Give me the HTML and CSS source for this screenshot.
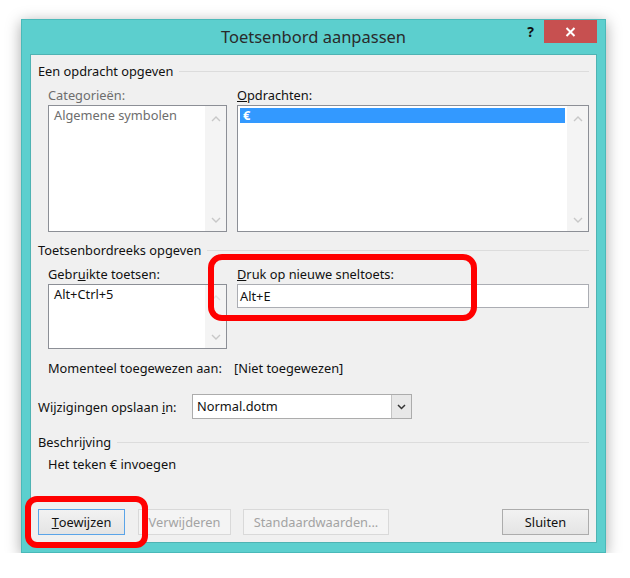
FILE: index.html
```html
<!DOCTYPE html>
<html lang="nl">
<head>
  <meta charset="UTF-8" />
  <title>Toetsenbord aanpassen</title>
  <link rel="stylesheet" href="styles.css">
</head>
<body>
  <div class="window">
    <div class="titlebar">
      <span></span>
      <span class="title">Toetsenbord aanpassen</span>
      <div class="controls">
        <span class="help">?</span>
        <span class="close">
          <svg width="11" height="10" viewBox="0 0 11 10"><path d="M1.5 1 L9.5 9 M9.5 1 L1.5 9" stroke="#fff" stroke-width="2"/></svg>
        </span>
      </div>
    </div>

    <div class="client">
      <div class="group">Een opdracht opgeven</div>
      <div class="pair top">
        <div class="col">
          <div class="label disabled">Categorieën:</div>
          <div class="listbox tall">
            <div class="items"><div class="item disabled">Algemene symbolen</div></div>
            <div class="scroll">
              <svg width="10" height="6" viewBox="0 0 10 6"><path d="M1 5 L5 1 L9 5" fill="none" stroke="#c8c8c8" stroke-width="1.4"/></svg>
              <svg width="10" height="6" viewBox="0 0 10 6"><path d="M1 1 L5 5 L9 1" fill="none" stroke="#c8c8c8" stroke-width="1.4"/></svg>
            </div>
          </div>
        </div>
        <div class="col">
          <div class="label"><u>O</u>pdrachten:</div>
          <div class="listbox tall">
            <div class="items"><div class="item selected">€</div></div>
            <div class="scroll">
              <svg width="10" height="6" viewBox="0 0 10 6"><path d="M1 5 L5 1 L9 5" fill="none" stroke="#c8c8c8" stroke-width="1.4"/></svg>
              <svg width="10" height="6" viewBox="0 0 10 6"><path d="M1 1 L5 5 L9 1" fill="none" stroke="#c8c8c8" stroke-width="1.4"/></svg>
            </div>
          </div>
        </div>
      </div>

      <div class="group second">Toetsenbordreeks opgeven</div>
      <div class="pair">
        <div class="col">
          <div class="label">Gebr<u>u</u>ikte toetsen:</div>
          <div class="listbox short">
            <div class="items"><div class="item">Alt+Ctrl+5</div></div>
            <div class="scroll">
              <svg width="10" height="6" viewBox="0 0 10 6"><path d="M1 5 L5 1 L9 5" fill="none" stroke="#e0e0e0" stroke-width="1.4"/></svg>
              <svg width="10" height="6" viewBox="0 0 10 6"><path d="M1 1 L5 5 L9 1" fill="none" stroke="#c8c8c8" stroke-width="1.4"/></svg>
            </div>
          </div>
        </div>
        <div class="col">
          <div class="label"><u>D</u>ruk op nieuwe sneltoets:</div>
          <div class="input">Alt+E</div>
        </div>
      </div>

      <div class="current">
        <span class="current-label">Momenteel toegewezen aan:</span>
        <span>[Niet toegewezen]</span>
      </div>

      <div class="save">
        <span class="save-label">Wijzigingen opslaan <u>i</u>n:</span>
        <div class="combo">
          <span class="value">Normal.dotm</span>
          <span class="drop">
            <svg width="9" height="6" viewBox="0 0 9 6"><path d="M1 1 L4.5 4.5 L8 1" fill="none" stroke="#333" stroke-width="1.5"/></svg>
          </span>
        </div>
      </div>

      <div class="group third">Beschrijving</div>
      <div class="desc">Het teken € invoegen</div>

      <div class="buttons">
        <span class="btn default"><u>T</u>oewijzen</span>
        <span class="btn off">Verwijderen</span>
        <span class="btn off wide">Standaardwaarden...</span>
        <span class="spacer"></span>
        <span class="btn">Sluiten</span>
      </div>

      <div class="mark mark-key"></div>
      <div class="mark mark-btn"></div>
    </div>
  </div>
</body>
</html>
```

FILE: styles.css
```css
body {
  margin: 0;
  background: #fff;
  font-family: 'Noto Sans', 'Open Sans', sans-serif;
  font-size: 12.8px;
  color: #111;
}
.window {
  margin: 19px 0 0 21px;
  width: 585px;
  height: 534px;
  box-sizing: border-box;
  background: #5ccfce;
  border: 1px solid #4ab9b9;
  padding: 0 8px 9px 8px;
  display: flex;
  flex-direction: column;
  box-shadow: 0 3px 14px rgba(0, 0, 0, 0.35);
}
.titlebar {
  height: 34px;
  display: grid;
  grid-template-columns: 1fr auto 1fr;
  align-items: start;
}
.title {
  font-size: 16.5px;
  color: #2a2a2a;
  margin-top: 5px;
}
.controls {
  display: flex;
  justify-content: flex-end;
  align-items: flex-start;
}
.help {
  font-weight: bold;
  font-size: 14px;
  color: #111;
  margin: 2px 10px 0 0;
}
.close {
  width: 53px;
  height: 23px;
  background: #c75050;
  display: flex;
  align-items: center;
  justify-content: center;
}
.client {
  position: relative;
  flex: 1;
  background: #f0f0f0;
  border: 1px solid #4fb3b3;
  padding: 8px 7px 7px 7px;
  display: flex;
  flex-direction: column;
}
.group {
  display: flex;
  align-items: center;
  gap: 6px;
  height: 16px;
  line-height: 16px;
}
.group::after {
  content: "";
  flex: 1;
  border-top: 1px solid #dcdcdc;
  margin-top: 1px;
}
.group.second { margin-top: 10px; }
.group.third { margin-top: 15px; }
.pair {
  display: grid;
  grid-template-columns: 179px 1fr;
  gap: 10px;
  margin: 8px 0 0 10px;
}
.label {
  line-height: 16px;
  margin-bottom: 2px;
}
.disabled { color: #6d6d6d; }
.listbox {
  background: #fff;
  border: 1px solid #8c8f96;
  display: flex;
}
.listbox.tall { height: 125px; }
.listbox.short { height: 63px; }
.items {
  flex: 1;
  padding: 2px;
}
.item {
  height: 15px;
  line-height: 15px;
  padding-left: 3px;
}
.item.selected {
  background: #3399ff;
  color: #fff;
  font-weight: bold;
}
.scroll {
  width: 21px;
  background: #f4f4f4;
  display: flex;
  flex-direction: column;
  justify-content: space-between;
  align-items: center;
  padding: 10px 0 8px;
}
.input {
  height: 22px;
  line-height: 22px;
  background: #fff;
  border: 1px solid #abadb3;
  padding-left: 2px;
}
.current {
  display: flex;
  margin: 11px 0 0 10px;
  line-height: 16px;
}
.current-label { width: 186px; }
.save {
  display: flex;
  align-items: center;
  margin-top: 18px;
}
.save-label { width: 154px; }
.combo {
  width: 220px;
  height: 25px;
  box-sizing: border-box;
  background: #fff;
  border: 1px solid #acacac;
  display: flex;
}
.combo .value {
  flex: 1;
  line-height: 23px;
  padding-left: 4px;
}
.combo .drop {
  width: 19px;
  background: #e8e8e8;
  border-left: 1px solid #c4c4c4;
  display: flex;
  align-items: center;
  justify-content: center;
}
.desc {
  margin: 6px 0 0 10px;
  line-height: 16px;
}
.buttons {
  margin-top: auto;
  display: flex;
  gap: 12px;
}
.spacer { flex: 1; }
.btn {
  width: 87px;
  height: 26px;
  box-sizing: border-box;
  border: 1px solid #acacac;
  background: linear-gradient(#f2f2f2, #e4e4e4);
  display: flex;
  align-items: center;
  justify-content: center;
}
.btn.default {
  border-color: #5aa4e8;
  margin-right: 1px;
}
.btn.off {
  width: 93px;
  border-color: #d9d9d9;
  background: #f4f4f4;
  color: #a3a3a3;
}
.btn.off.wide { width: 146px; }
.mark {
  position: absolute;
  border: 6px solid #ff0000;
  border-radius: 14px;
  box-sizing: border-box;
}
.mark-key {
  left: 177px;
  top: 199px;
  width: 269px;
  height: 67px;
}
.mark-btn {
  left: -6px;
  top: 441px;
  width: 123px;
  height: 52px;
  border-radius: 12px;
}
```
